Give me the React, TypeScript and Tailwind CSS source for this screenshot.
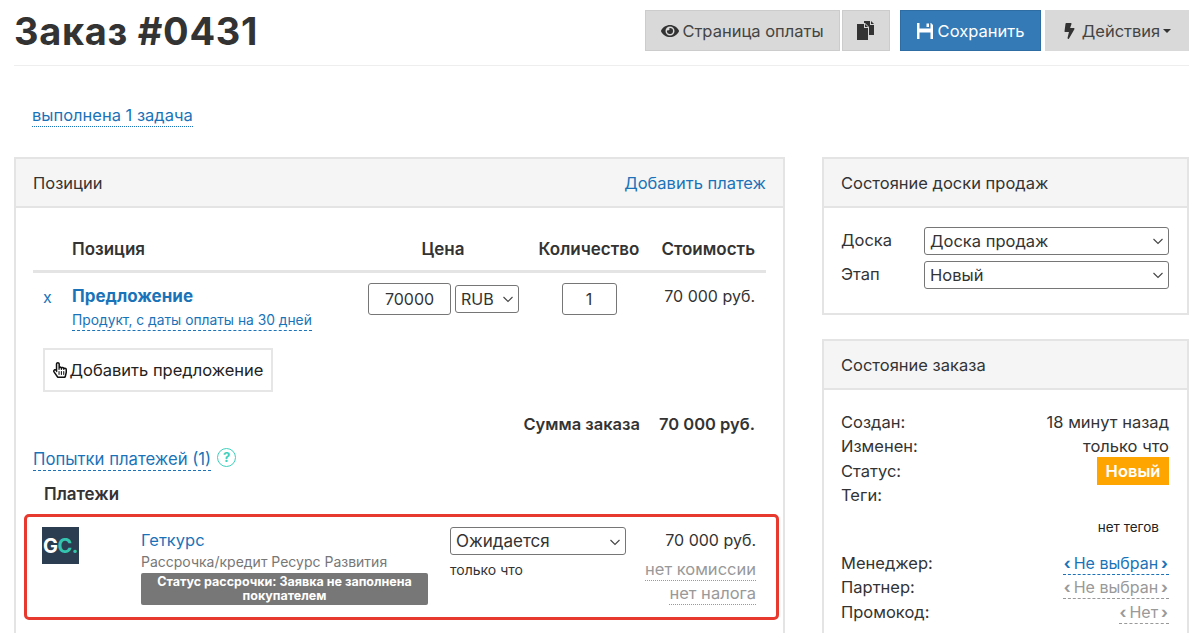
import React from 'react'
import { FaBolt, FaEye, FaRegHandPointer } from 'react-icons/fa'

const FONT = "font-['Inter','Noto_Sans',sans-serif]"

/** Шеврон нативного селекта */
const Chevron = () => (
  <svg className="w-[14px] h-[14px] text-[#444] shrink-0" viewBox="0 0 14 14" fill="none" stroke="currentColor" strokeWidth="1.1">
    <path d="M2.5 5l4.5 4.5L11.5 5" />
  </svg>
)

const Select = ({ value, className = '' }: { value: string; className?: string }) => (
  <div className={`flex items-center justify-between border border-[#767676] rounded-[3px] bg-white pl-[5px] pr-[3px] text-[#333] ${className}`}>
    <span>{value}</span>
    <Chevron />
  </div>
)

const CopyIcon = () => (
  <svg className="w-[18px] h-[19px]" viewBox="0 0 18 19" fill="#333">
    <path d="M0 3h7v4h4v12H0z" />
    <path d="M8 3l3 3H8z" />
    <path d="M7 0h6v4h4v10h-5V6L8 2H7z" />
    <path d="M14 0l3 3h-3z" />
  </svg>
)

/** Дискета: сплошной квадрат с прорезями сверху и снизу */
const SaveIcon = () => (
  <svg className="w-[16px] h-[16px]" viewBox="0 0 16 16" fill="currentColor">
    <path d="M0 0h2.5v5.5h11V0h.5l2 2v14h-2.5V9.5h-11V16H0z" />
    <path d="M9.5 0.5h2.5v3.5H9.5z" />
  </svg>
)

const Panel = ({ title, action, children, className = '' }: { title: string; action?: string; children: React.ReactNode; className?: string }) => (
  <div className={`border-2 border-[#e4e4e4] bg-white ${className}`}>
    <div className="flex items-center justify-between h-[49px] pt-[2px] px-[17px] bg-[#f5f5f5] border-b-2 border-[#e4e4e4] text-[#333]">
      <span>{title}</span>
      {action && <a className="text-[#1a73b8]">{action}</a>}
    </div>
    {children}
  </div>
)

const InfoRow = ({ label, children }: { label: string; children?: React.ReactNode }) => (
  <div className="flex items-center justify-between h-[24.5px]">
    <span className="text-[#333]">{label}</span>
    {children}
  </div>
)

/** Значение в угловых скобках с пунктиром */
const Picker = ({ value, className }: { value: string; className: string }) => (
  <a className={`flex items-center leading-[22px] text-[16px] border-b border-dashed ${className}`}>
    <span className="font-bold pl-[1px] pr-[3px]">‹</span>
    {value}
    <span className="font-bold pl-[3px] pr-[1px]">›</span>
  </a>
)

export default function App() {
  return (
    <div className={`h-[633px] w-[1200px] overflow-hidden bg-white pl-[14px] pr-[11px] text-[16.5px] text-[#333] ${FONT}`}>
      {/* Шапка */}
      <div className="flex items-center justify-between h-[66px] pb-[4px] border-b border-[#eee]">
        <h1 className="text-[38px] font-bold text-[#333] tracking-[0.7px] leading-none">Заказ #0431</h1>
        <div className="flex items-center h-[41px]">
          <button className="flex items-center justify-center gap-[3px] w-[195px] h-[41px] pt-[1px] bg-[#d9d9d9] border border-[#ccc] text-[#444]">
            <FaEye className="w-[18px] h-[18px] text-[#333]" />
            Страница оплаты
          </button>
          <button className="flex items-center justify-center w-[48px] h-[41px] ml-[2px] bg-[#d9d9d9] border border-[#ccc]">
            <CopyIcon />
          </button>
          <button className="flex items-center justify-center gap-[5px] w-[141px] h-[41px] pt-[1px] ml-[10px] bg-[#337ab7] border border-[#2e6da4] text-white">
            <SaveIcon />
            Сохранить
          </button>
          <button className="flex items-center justify-center gap-[6px] w-[144px] h-[41px] pt-[1px] ml-[4px] bg-[#d9d9d9] text-[#444]">
            <FaBolt className="w-[13px] h-[16px] text-[#333]" />
            <span>Действия</span>
            <span className="w-0 h-0 -ml-[3px] border-x-[4.5px] border-x-transparent border-t-[4.5px] border-t-[#333]" />
          </button>
        </div>
      </div>

      <div className="pt-[37px] pl-[18px] h-[91px]">
        <a className="inline-block text-[#1a73b8] leading-[22px] border-b border-dotted border-[#1a73b8]">выполнена 1 задача</a>
      </div>

      <div className="flex items-start gap-[37px]">
        {/* Левая колонка */}
        <Panel title="Позиции" action="Добавить платеж" className="w-[771px] h-[600px]">
          <div className="pl-[17px] pr-[17px]">
            <div className="flex items-start h-[65px] pt-[30px] text-[17px] leading-[22px] font-semibold border-b-[3px] border-[#e4e4e4]">
              <span className="w-[39px]" />
              <span className="w-[296px]">Позиция</span>
              <span className="w-[150px] text-center">Цена</span>
              <span className="w-[142px] text-center">Количество</span>
              <span className="w-[95px] text-right whitespace-nowrap">Стоимость</span>
            </div>
            <div className="flex items-start h-[75px] pt-[10px] text-[16px]">
              <span className="w-[39px] pl-[10px] pt-[2px] text-[#1a73b8]">x</span>
              <div className="w-[296px] pt-[2px]">
                <div className="text-[17px] font-bold text-[#1a73b8] leading-[22px]">Предложение</div>
                <a className="inline-block -mt-[2px] text-[13.8px] leading-[19px] text-[#1a73b8] border-b border-dashed border-[#1a73b8]">Продукт, с даты оплаты на 30 дней</a>
              </div>
              <div className="flex items-center w-[151px] h-[32px]">
                <div className="w-[83px] h-[32px] flex items-center justify-center border border-[#767676] rounded-[3px]">70000</div>
                <Select value="RUB" className="w-[64px] h-[28px] ml-[4px]" />
              </div>
              <div className="w-[140px] flex justify-center">
                <div className="w-[55px] h-[32px] flex items-center justify-center border border-[#767676] rounded-[3px]">1</div>
              </div>
              <span className="w-[96px] pt-[2px] text-right leading-[22px]">70 000 руб.</span>
            </div>
            <div className="pl-[10px]">
              <button className="flex items-center justify-center gap-[3px] w-[230px] h-[44px] border-2 border-[#e6e6e6] text-[#222]">
                <FaRegHandPointer className="w-[14px] h-[18px] text-[#111]" />
                Добавить предложение
              </button>
            </div>
            <div className="flex justify-end h-[57px] pt-[21px] pr-[11px] font-semibold leading-[22px]">
              <span>Сумма заказа</span>
              <span className="ml-[19px]">70 000 руб.</span>
            </div>
            <div className="flex items-center h-[22px] -mt-[1px]">
              <a className="text-[16.7px] text-[#1a73b8] leading-[22px] border-b border-dashed border-[#1a73b8]">Попытки платежей (1)</a>
              <span className="flex items-center justify-center w-[19px] h-[19px] ml-[6px] -mt-[3px] rounded-full border-[1.5px] border-[#3fd0bd] text-[13px] font-bold text-[#3fd0bd]">?</span>
            </div>
            <div className="pl-[11px] pt-[13px] text-[17px] font-semibold leading-[22px]">Платежи</div>
          </div>
          <div className="flex mt-[9px] ml-[8px] w-[755px] h-[106px] border-[3px] border-[#e8392e] rounded-[5px]">
            <div className="w-[114px] pt-[10px] pl-[15px] shrink-0">
              <div className="flex items-center justify-center w-[37px] h-[37px] bg-[#2b3d50] text-[20px] font-bold leading-none tracking-[-0.5px]">
                <span className="text-white">G</span>
                <span className="text-[#35c4b0]">C.</span>
              </div>
            </div>
            <div className="w-[287px] pr-[0px] pt-[12px] shrink-0">
              <div className="leading-[22px] text-[#1a73b8]">Геткурс</div>
              <div className="text-[14px] leading-[20px] text-[#777] mt-[1px]">Рассрочка/кредит Ресурс Развития</div>
              <div className="mt-[1px] rounded-[2px] bg-[#777] text-white text-[12.5px] font-bold leading-[14px] text-center py-[2px] px-[6px]">
                Статус рассрочки: Заявка не заполнена покупателем
              </div>
            </div>
            <div className="w-[198px] pl-[22px] pt-[10px] shrink-0">
              <Select value="Ожидается" className="w-[176px] h-[28px] pt-[2px] text-[17px]" />
              <div className="text-[14px] leading-[18px] mt-[6px] text-[#333]">только что</div>
            </div>
            <div className="flex-1 flex flex-col items-end pr-[20px] pt-[12px]">
              <span className="text-[16px] leading-[22px]">70 000 руб.</span>
              <span className="mt-[8px] text-[#999] leading-[21px] border-b border-dotted border-[#999]">нет комиссии</span>
              <span className="mt-[2px] text-[#999] leading-[21px] border-b border-dotted border-[#999]">нет налога</span>
            </div>
          </div>
        </Panel>

        {/* Правая колонка */}
        <div className="w-[367px] flex flex-col gap-[24px]">
          <Panel title="Состояние доски продаж" className="h-[158px]">
            <div className="flex flex-col gap-[6px] pt-[19px] pl-[17px] pr-[18px]">
              <div className="flex items-center">
                <span className="w-[83px] -mt-[1px]">Доска</span>
                <Select value="Доска продаж" className="flex-1 h-[28px]" />
              </div>
              <div className="flex items-center">
                <span className="w-[83px] -mt-[1px]">Этап</span>
                <Select value="Новый" className="flex-1 h-[28px]" />
              </div>
            </div>
          </Panel>
          <Panel title="Состояние заказа" className="h-[400px]">
            <div className="pt-[20px] pl-[17px] pr-[18px]">
              <InfoRow label="Создан:"><span>18 минут назад</span></InfoRow>
              <InfoRow label="Изменен:"><span>только что</span></InfoRow>
              <InfoRow label="Статус:">
                <span className="flex items-center justify-center w-[72px] h-[28px] bg-[#ffa500] text-white font-semibold">Новый</span>
              </InfoRow>
              <InfoRow label="Теги:" />
              <div className="h-[43px] pt-[9px] pr-[10px] text-right text-[13.5px] leading-[20px] text-[#222]">нет тегов</div>
              <InfoRow label="Менеджер:">
                <Picker value="Не выбран" className="text-[#1a73b8] border-[#1a73b8]" />
              </InfoRow>
              <InfoRow label="Партнер:">
                <Picker value="Не выбран" className="text-[#999] border-[#999]" />
              </InfoRow>
              <InfoRow label="Промокод:">
                <Picker value="Нет" className="text-[#999] border-[#999]" />
              </InfoRow>
            </div>
          </Panel>
        </div>
      </div>
    </div>
  )
}
